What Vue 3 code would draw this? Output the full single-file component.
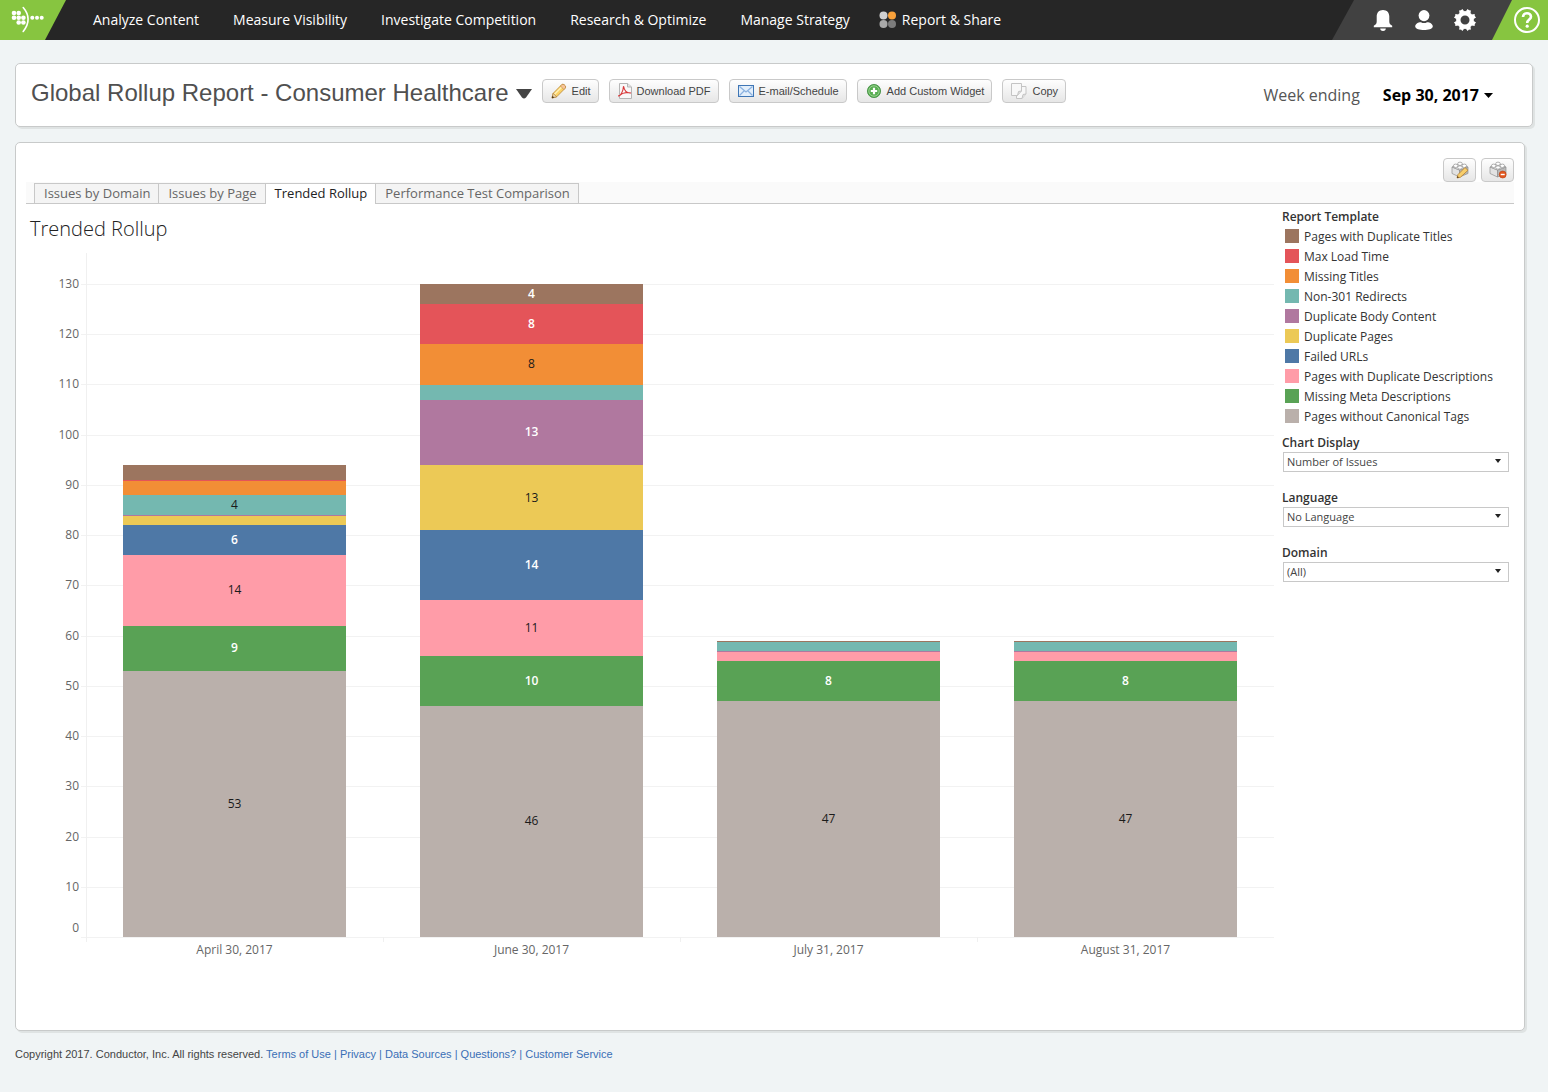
<script setup>
import { ref } from 'vue'

const menu = [
  'Analyze Content',
  'Measure Visibility',
  'Investigate Competition',
  'Research & Optimize',
  'Manage Strategy'
]

const tabs = ['Issues by Domain', 'Issues by Page', 'Trended Rollup', 'Performance Test Comparison']
const activeTab = ref('Trended Rollup')

const series = [
  { key: 'dupTitles', name: 'Pages with Duplicate Titles', color: '#9c755f', light: true },
  { key: 'loadTime', name: 'Max Load Time', color: '#e45459', light: true },
  { key: 'noTitle', name: 'Missing Titles', color: '#f28e36' },
  { key: 'redirects', name: 'Non-301 Redirects', color: '#74b8b0' },
  { key: 'dupBody', name: 'Duplicate Body Content', color: '#b0789f', light: true },
  { key: 'dupPages', name: 'Duplicate Pages', color: '#ecc956' },
  { key: 'failed', name: 'Failed URLs', color: '#4e78a6', light: true },
  { key: 'dupDesc', name: 'Pages with Duplicate Descriptions', color: '#ff9ca8' },
  { key: 'noDesc', name: 'Missing Meta Descriptions', color: '#59a255', light: true },
  { key: 'noCanonical', name: 'Pages without Canonical Tags', color: '#bab0ab' }
]

const bars = [
  { date: 'April 30, 2017', values: { dupTitles: 3, loadTime: 0, noTitle: 3, redirects: 4, dupBody: 0, dupPages: 2, failed: 6, dupDesc: 14, noDesc: 9, noCanonical: 53 } },
  { date: 'June 30, 2017', values: { dupTitles: 4, loadTime: 8, noTitle: 8, redirects: 3, dupBody: 13, dupPages: 13, failed: 14, dupDesc: 11, noDesc: 10, noCanonical: 46 } },
  { date: 'July 31, 2017', values: { dupTitles: 0, redirects: 2, dupBody: 0, dupDesc: 2, noDesc: 8, noCanonical: 47 } },
  { date: 'August 31, 2017', values: { dupTitles: 0, redirects: 2, dupBody: 0, dupDesc: 2, noDesc: 8, noCanonical: 47 } }
]

const axisMax = 130
const ticks = Array.from({ length: 13 }, (_, i) => axisMax - i * 10)

const segments = (bar) =>
  series
    .filter((s) => bar.values[s.key] !== undefined)
    .map((s) => ({ ...s, value: bar.values[s.key] }))

const segmentStyle = (seg) =>
  seg.value === 0
    ? { background: seg.color }
    : { background: seg.color, height: (seg.value / axisMax) * 100 + '%' }

const filters = [
  { id: 'display', label: 'Chart Display', value: 'Number of Issues' },
  { id: 'language', label: 'Language', value: 'No Language' },
  { id: 'domain', label: 'Domain', value: '(All)' }
]

const footerLinks = ['Terms of Use', 'Privacy', 'Data Sources', 'Questions?', 'Customer Service']
</script>

<template>
  <div class="page">
    <header class="topbar">
      <a class="logo" href="#" aria-label="Conductor">
        <svg width="45" height="40" viewBox="0 0 45 40" fill="#fff">
          <circle cx="14" cy="13" r="2.3" /><circle cx="18.7" cy="13" r="2.3" />
          <circle cx="14" cy="17.8" r="2.3" /><circle cx="18.7" cy="17.8" r="2.3" /><circle cx="23.4" cy="17.8" r="2.3" />
          <circle cx="18.7" cy="22.5" r="2.3" /><circle cx="23.4" cy="22.5" r="2.3" />
          <path d="M23.2 7.5Q33 19 23.2 31.5" fill="none" stroke="#fff" stroke-width="1.600" stroke-linecap="round" />
          <circle cx="32.3" cy="17.8" r="2" /><circle cx="37" cy="17.8" r="2" /><circle cx="41.7" cy="17.8" r="2" />
        </svg>
      </a>
      <nav class="menu">
        <a v-for="item in menu" :key="item" href="#">{{ item }}</a>
        <a class="current" href="#">
          <svg width="18" height="18" viewBox="0 0 18 18">
            <circle cx="4.5" cy="4.5" r="4" fill="#d0d0d0" /><circle cx="13" cy="4.5" r="4" fill="#f9a13a" />
            <circle cx="4.5" cy="13" r="4" fill="#a9a9a9" /><circle cx="13" cy="13" r="4" fill="#7c7c7c" />
          </svg>
          Report &amp; Share
        </a>
      </nav>
      <div class="tools">
        <button type="button" aria-label="Notifications">
          <svg width="24" height="24" viewBox="0 0 24 24" fill="#fff">
            <path d="M12 2C8 2 5.700 4.800 5.700 8.500V13.500C5.700 15.500 5 16.500 2.800 17.700V19.200H21.200V17.700C19 16.500 18.300 15.500 18.300 13.500V8.500C18.300 4.800 16 2 12 2Z" />
            <path d="M9.200 20.500H14.800A2.800 2.400 0 0 1 9.200 20.500Z" />
          </svg>
        </button>
        <button type="button" aria-label="Account">
          <svg width="24" height="24" viewBox="0 0 24 24" fill="#fff">
            <ellipse cx="12" cy="7.600" rx="5.400" ry="5.600" />
            <path d="M3.200 18.500C3.200 15.500 7 14 9 14.200Q12 16 15 14.200C17 14 20.800 15.500 20.800 18.500C20.800 21 16 22 12 22S3.200 21 3.200 18.500Z" />
          </svg>
        </button>
        <button type="button" aria-label="Settings">
          <svg width="24" height="24" viewBox="0 0 24 24">
            <circle cx="12" cy="12" r="6.700" fill="none" stroke="#fff" stroke-width="4.400" />
            <g fill="#fff">
              <path v-for="a in 8" :key="a" d="M9.400 4L10.200 0.800Q12 2 13.800 0.800L14.600 4Z" :transform="`rotate(${a * 45 + 22.5} 12 12)`" />
            </g>
          </svg>
        </button>
        <a class="help" href="#" aria-label="Help">
          <svg width="28" height="28" viewBox="0 0 28 28" fill="none" stroke="#fff">
            <circle cx="14" cy="14" r="12" stroke-width="2" />
            <path d="M10 11C10 8.600 11.700 7.300 14 7.300S18 8.700 18 10.700C18 13.500 14.200 13.600 14.200 17" stroke-width="2.600" />
            <circle cx="14.200" cy="20.200" r="1.600" fill="#fff" stroke="none" />
          </svg>
        </a>
      </div>
    </header>

    <section class="panel report-head">
      <h1>Global Rollup Report - Consumer Healthcare</h1>
      <button class="title-caret" type="button" aria-label="Switch report">
        <svg width="16" height="10" viewBox="0 0 16 10"><path d="M0 0H16L10 8.500Q8 10.500 6 8.500Z" fill="#444" /></svg>
      </button>
      <div class="actions">
        <button class="btn" type="button">
          <svg width="16" height="16" viewBox="0 0 16 16">
            <path d="M1 15L2.200 10.300L10.800 1.600Q12 0.700 13.200 1.800L14.300 2.900Q15.200 4 14.200 5.200L5.700 13.800Z" fill="#fbd267" stroke="#b9873a" stroke-width="0.800" />
            <path d="M3.500 11.300L11.800 3" stroke="#fff0b5" stroke-width="1.600" />
            <path d="M10.800 1.600Q12 0.700 13.200 1.800L14.300 2.900Q15.200 4 14.200 5.200L12.800 6.500L9.500 3Z" fill="#f7c49a" stroke="#b9873a" stroke-width="0.600" />
            <path d="M2.200 10.300L5.700 13.800L1 15Z" fill="#ead6ae" stroke="#a8762e" stroke-width="0.600" /><path d="M1.500 12.800L3.200 14.500L0.800 15.200Z" fill="#4a3418" />
          </svg>
          Edit
        </button>
        <button class="btn" type="button">
          <svg width="14" height="16" viewBox="0 0 14 16">
            <path d="M1.500 0.500H9.500L13.500 4V15.500H1.500Z" fill="#f8f8f8" stroke="#b5b5b5" /><path d="M9.500 0.500V4H13.500" fill="#e4e4e4" stroke="#b5b5b5" />
            <path d="M0.500 13C2.500 13 5.300 8 5.500 3.200C6.500 8.500 9 10.500 13 10C9 9 4.500 9.800 0.500 13Z" fill="none" stroke="#d8383a" stroke-width="1.100" />
          </svg>
          Download PDF
        </button>
        <button class="btn" type="button">
          <svg width="16" height="16" viewBox="0 0 16 16">
            <rect x="0.500" y="2.500" width="15" height="11" fill="#e3effb" stroke="#3f76b5" />
            <path d="M1.500 12.500L6.500 7.500M14.500 12.500L9.500 7.500M1.500 3.500L8 9L14.500 3.500" fill="none" stroke="#8bb2e0" stroke-width="1.200" />
          </svg>
          E-mail/Schedule
        </button>
        <button class="btn" type="button">
          <svg width="16" height="16" viewBox="0 0 16 16">
            <circle cx="8" cy="8" r="6.600" fill="#58ad52" stroke="#3f8b3f" stroke-width="0.800" /><circle cx="8" cy="8" r="5.200" fill="none" stroke="#a8dba0" stroke-width="0.800" />
            <path d="M8 4.800V11.200M4.800 8H11.200" stroke="#fff" stroke-width="2.200" />
          </svg>
          Add Custom Widget
        </button>
        <button class="btn" type="button">
          <svg width="16" height="16" viewBox="0 0 16 16" fill="#f8f8f8" stroke="#c4c4c4">
            <path d="M5.500 3.500H15V11L11 15.500H5.500Z" /><path d="M15 11L12 11.500L11 15.500" fill="#e2e2e2" />
            <path d="M0.500 0.500H10.500V8L6.500 12.500H0.500Z" /><path d="M10.500 8L7.500 8.500L6.500 12.500" fill="#ddd" />
          </svg>
          Copy
        </button>
      </div>
      <div class="period">
        <span>Week ending</span>
        <button type="button">
          Sep 30, 2017
          <svg width="9" height="5" viewBox="0 0 9 5"><path d="M0 0H9L4.500 5Z" /></svg>
        </button>
      </div>
    </section>

    <main class="panel widget">
      <div class="widget-tools">
        <button class="btn icon-btn" type="button" aria-label="Edit widget">
          <svg width="18" height="18" viewBox="0 0 18 18">
            <g stroke="#8f8f8f" stroke-width="0.700">
              <path d="M1 6L8.500 9V16L1 12.500Z" fill="#e2e2e2" /><path d="M8.500 9L17 6V12.500L8.500 16Z" fill="#b9b9b9" /><path d="M1 6L9 2.500L17 6L8.500 9Z" fill="#f3f3f3" />
              <ellipse cx="9" cy="2.800" rx="2.300" ry="1.700" fill="#fff" /><ellipse cx="4.700" cy="4.800" rx="2.300" ry="1.700" fill="#fff" /><ellipse cx="13.300" cy="4.800" rx="2.300" ry="1.700" fill="#fff" /><ellipse cx="9" cy="6.500" rx="2.300" ry="1.700" fill="#fff" />
            </g>
            <path d="M6 17L7 13.500L14 6.500L17 9.300L9.500 16.200Z" fill="#f8ce6b" stroke="#b07d33" stroke-width="0.800" /><path d="M6 17L6.600 15L8 16.400Z" fill="#4a3418" />
          </svg>
        </button>
        <button class="btn icon-btn" type="button" aria-label="Remove widget">
          <svg width="18" height="18" viewBox="0 0 18 18">
            <g stroke="#8f8f8f" stroke-width="0.700">
              <path d="M1 6L8.500 9V16L1 12.500Z" fill="#e2e2e2" /><path d="M8.500 9L17 6V12.500L8.500 16Z" fill="#b9b9b9" /><path d="M1 6L9 2.500L17 6L8.500 9Z" fill="#f3f3f3" />
              <ellipse cx="9" cy="2.800" rx="2.300" ry="1.700" fill="#fff" /><ellipse cx="4.700" cy="4.800" rx="2.300" ry="1.700" fill="#fff" /><ellipse cx="13.300" cy="4.800" rx="2.300" ry="1.700" fill="#fff" /><ellipse cx="9" cy="6.500" rx="2.300" ry="1.700" fill="#fff" />
            </g>
            <circle cx="13.700" cy="13.500" r="3.500" fill="#e2571f" stroke="#b93f12" stroke-width="0.600" /><path d="M11.700 13.500H15.700" stroke="#fff" stroke-width="1.400" />
          </svg>
        </button>
      </div>

      <div class="tabs" role="tablist">
        <button
          v-for="tab in tabs"
          :key="tab"
          type="button"
          role="tab"
          :aria-selected="tab === activeTab"
          :class="['tab', { active: tab === activeTab }]"
          @click="activeTab = tab"
        >{{ tab }}</button>
      </div>

      <div class="view">
        <section class="chart">
          <h2>Trended Rollup</h2>
          <div class="plot">
            <div class="grid-layer">
              <div v-for="t in ticks" :key="t" class="grid-row">
                <span class="tick">{{ t }}</span>
                <span class="line"></span>
              </div>
              <div class="grid-row base">
                <span class="tick">0</span>
                <span class="line"></span>
              </div>
            </div>
            <div class="bar-layer">
              <div v-for="bar in bars" :key="bar.date" class="bar">
                <div
                  v-for="seg in segments(bar)"
                  :key="seg.key"
                  :class="['seg', { light: seg.light, zero: seg.value === 0 }]"
                  :style="segmentStyle(seg)"
                ><span v-if="seg.value > 3">{{ seg.value }}</span></div>
              </div>
            </div>
            <div class="dates">
              <span v-for="bar in bars" :key="bar.date">{{ bar.date }}</span>
            </div>
          </div>
        </section>

        <aside class="side">
          <h3>Report Template</h3>
          <ul class="legend">
            <li v-for="s in series" :key="s.key">
              <i :style="{ background: s.color }"></i>{{ s.name }}
            </li>
          </ul>
          <div v-for="f in filters" :key="f.id" class="filter">
            <label :for="f.id">{{ f.label }}</label>
            <div class="select">
              <select :id="f.id"><option>{{ f.value }}</option></select>
            </div>
          </div>
        </aside>
      </div>
    </main>

    <footer class="footer">
      Copyright 2017. Conductor, Inc. All rights reserved.
      <template v-for="(link, i) in footerLinks" :key="link"><span v-if="i > 0"> | </span><a href="#">{{ link }}</a></template>
    </footer>
  </div>
</template>

<style>
body {
  margin: 0;
  background: #f0f4f5;
}
</style>

<style scoped>
.page {
  min-height: 100vh;
  box-sizing: border-box;
  background: #f0f4f5;
  font-family: "Open Sans", sans-serif;
  color: #333;
}
.page *,
.page *::after {
  box-sizing: border-box;
}
button {
  margin: 0;
  padding: 0;
  border: 0;
  background: none;
  font: inherit;
  color: inherit;
  cursor: pointer;
}
svg {
  display: block;
  flex: none;
}
a {
  text-decoration: none;
}
h1, h2, h3, ul {
  margin: 0;
  padding: 0;
  font-weight: 400;
}

/* Top bar */
.topbar {
  display: flex;
  height: 40px;
  background: #262626;
}
.logo {
  width: 66px;
  background: #87c540;
  clip-path: polygon(0 0, 66px 0, 45px 100%, 0 100%);
}
.menu {
  flex: 1;
  display: flex;
  align-items: center;
  gap: 34px;
  padding-left: 27px;
}
.menu a {
  font-size: 14px;
  line-height: 20px;
  font-weight: 500;
  color: #fff;
  white-space: nowrap;
}
.menu .current {
  display: flex;
  align-items: center;
  gap: 5px;
  margin-left: -5px;
}
.tools {
  display: flex;
  align-items: center;
  gap: 17px;
  padding-left: 39px;
  background: #414141;
  clip-path: polygon(22px 0, 100% 0, 100% 100%, 0 100%);
}
.help {
  display: flex;
  align-items: center;
  width: 56px;
  height: 40px;
  margin-left: -2px;
  padding-left: 21px;
  background: #87c540;
  clip-path: polygon(20px 0, 100% 0, 100% 100%, 0 100%);
}

/* Panels */
.panel {
  background: #fff;
  border: 1px solid #c8caca;
  border-radius: 5px;
  box-shadow: 2px 2px 0 #dfe3e3;
}
.btn {
  display: flex;
  align-items: center;
  gap: 5px;
  height: 24px;
  padding: 0 7px 0 8px;
  border: 1px solid #c9c9c9;
  border-radius: 4px;
  background: linear-gradient(#fefefe, #e6e6e6);
  font: 11px "Liberation Sans", sans-serif;
  color: #444;
  white-space: nowrap;
}
.report-head {
  display: flex;
  align-items: center;
  height: 64px;
  margin: 23px 15px 0;
  padding: 0 39px 0 15px;
}
.report-head h1 {
  font: 24px/32px "Liberation Sans", sans-serif;
  color: #505050;
  padding-bottom: 4px;
}
.title-caret {
  margin: 0 10px 0 7px;
  padding-bottom: 2px;
}
.actions {
  display: flex;
  gap: 10px;
  padding-bottom: 8px;
}
.period {
  display: flex;
  gap: 23px;
  margin-left: auto;
  font-size: 16px;
  line-height: 24px;
  color: #555;
}
.period button {
  display: flex;
  align-items: center;
  gap: 5px;
  font-weight: 700;
  color: #000;
}

/* Widget */
.widget {
  margin: 15px 23px 0 15px;
  padding: 15px 10px 72px;
}
.widget-tools {
  display: flex;
  justify-content: flex-end;
  gap: 5px;
}
.icon-btn {
  width: 33px;
  justify-content: center;
  padding: 0;
}
.tabs {
  display: flex;
  height: 22px;
  padding: 1px 0 0 8px;
  border-bottom: 1px solid #c8c8c8;
  background: #fafafa;
}
.tab {
  height: 20px;
  padding: 0 8px 1px 9px;
  border: solid #c8c8c8;
  border-width: 1px 1px 0 0;
  background: #f4f4f4;
  font-size: 13px;
  line-height: 18px;
  color: #666;
  white-space: nowrap;
}
.tab:first-child {
  border-left-width: 1px;
}
.tab.active {
  height: 21px;
  padding-bottom: 2px;
  background: #fff;
  color: #222;
}
.view {
  display: flex;
  gap: 8px;
}
.chart {
  flex: 1;
}
.chart h2 {
  padding-left: 4px;
  font-size: 20px;
  line-height: 49px;
  font-weight: 300;
  color: #222;
}
.plot {
  display: grid;
  grid-template-columns: 60px 1fr;
  grid-template-rows: 684px auto;
  font-size: 12px;
  color: #666;
}
.grid-layer {
  grid-area: 1 / 1 / 2 / 3;
  display: flex;
  flex-direction: column;
  padding-top: 31px;
}
.grid-row {
  flex: 1;
  display: flex;
}
.grid-row.base {
  flex: none;
  height: 0;
}
.tick {
  width: 53px;
  height: 0;
  line-height: 0;
  text-align: right;
}
.base .tick {
  margin-top: -9px;
}
.line {
  flex: 1;
  height: 1px;
  margin-left: 2px;
  background: #f2f2f2;
}
.bar-layer {
  grid-area: 1 / 2;
  display: flex;
  padding-top: 31px;
  box-shadow: inset 1px 0 0 #f0f0f0;
}
.bar {
  flex: 1;
  display: flex;
  flex-direction: column;
  justify-content: flex-end;
  margin: 0 3.125%;
}
.seg {
  flex: none;
  display: flex;
  align-items: center;
  justify-content: center;
  line-height: 16px;
  color: #1a1a1a;
}
.seg.light {
  font-weight: 600;
  color: #fff;
}
.seg.zero {
  z-index: 1;
  height: 1px;
  margin-bottom: -1px;
}
.dates {
  grid-area: 2 / 2;
  display: flex;
}
.dates span {
  flex: 1;
  padding-top: 4px;
  line-height: 17px;
  text-align: center;
  background: linear-gradient(#f0f0f0, #f0f0f0) 0 0 / 1px 5px no-repeat;
}

/* Side column */
.side {
  width: 232px;
  padding-top: 3px;
  font-size: 12px;
  color: #333;
}
.side h3,
.filter label {
  display: block;
  font-size: 12px;
  line-height: 19px;
  font-weight: 600;
}
.legend {
  list-style: none;
}
.legend li {
  display: flex;
  align-items: center;
  height: 20px;
  padding-left: 3px;
  gap: 5px;
  white-space: nowrap;
}
.legend i {
  width: 14px;
  height: 14px;
}
.filter {
  height: 55px;
  padding-top: 7px;
}
.select {
  position: relative;
  width: 226px;
  margin-left: 1px;
}
.select::after {
  content: "";
  position: absolute;
  top: 7px;
  right: 8px;
  border: solid transparent;
  border-width: 4px 3px 0;
  border-top-color: #222;
  pointer-events: none;
}
.select select {
  appearance: none;
  display: block;
  width: 100%;
  height: 20px;
  padding: 0 3px 2px;
  border: 1px solid #c8c8c8;
  border-radius: 0;
  background: #fff;
  font: 11px "Open Sans", sans-serif;
  color: #444;
}

.footer {
  padding: 15px;
  font: 11px/16px "Liberation Sans", sans-serif;
  color: #444;
}
.footer a,
.footer span {
  color: #3a6fb5;
}
</style>
